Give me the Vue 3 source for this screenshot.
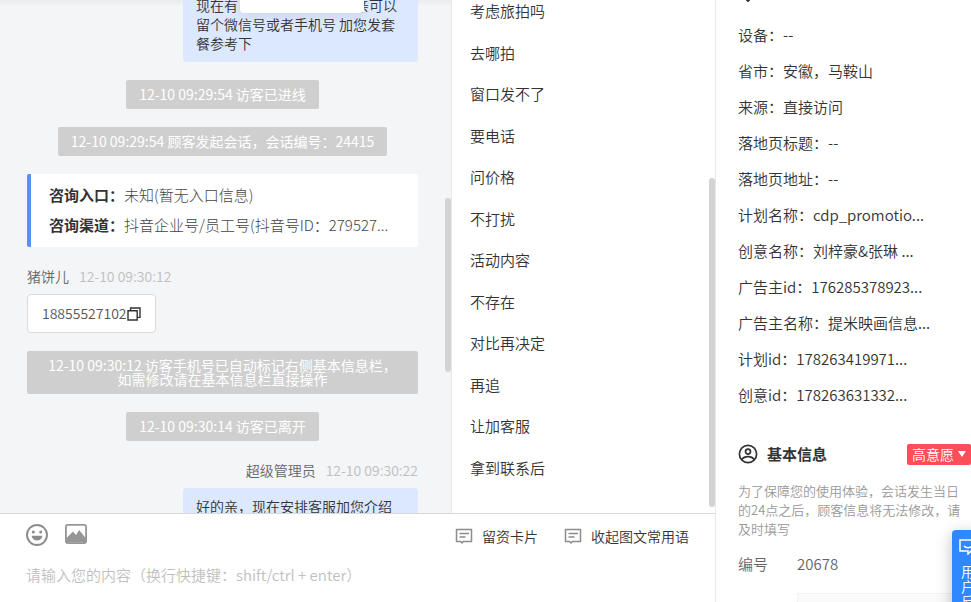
<template>
    <div class="desk">
        <main class="desk__main">
            <div class="desk__body">
                <section class="chat">
                    <div class="chat__list">
                        <div class="bubble bubble--mine">
                            现在有<span class="bubble__gap"></span>亲可以留个微信号或者手机号 加您发套餐参考下
                        </div>

                        <p v-for="notice in openNotices" :key="notice" class="notice">{{ notice }}</p>

                        <dl class="source">
                            <div v-for="item in source" :key="item.label" class="source__row">
                                <dt>{{ item.label }}：</dt>
                                <dd>{{ item.value }}</dd>
                            </div>
                        </dl>

                        <div class="message">
                            <div class="message__meta">
                                <span>猪饼儿</span>
                                <time>12-10 09:30:12</time>
                            </div>
                            <div class="bubble bubble--visitor">
                                18855527102
                                <button class="copy" type="button" aria-label="复制">
                                    <svg viewBox="0 0 14 14" width="14" height="14" fill="none" stroke="#333" stroke-width="1.4">
                                        <path d="M1 3.8h9.2V13H1z" />
                                        <path d="M3.6 3.6V1H13v9.4h-2.6" />
                                    </svg>
                                </button>
                            </div>
                        </div>

                        <p v-for="notice in closeNotices" :key="notice" class="notice">{{ notice }}</p>

                        <div class="message message--mine">
                            <div class="message__meta">
                                <span>超级管理员</span>
                                <time>12-10 09:30:22</time>
                            </div>
                            <div class="bubble bubble--mine">
                                好的亲，现在安排客服加您介绍
                            </div>
                        </div>
                    </div>
                    <span class="thumb thumb--chat"></span>
                </section>

                <section class="phrases">
                    <ul class="phrases__list">
                        <li v-for="phrase in phrases" :key="phrase">
                            <button class="phrases__item" type="button">{{ phrase }}</button>
                        </li>
                    </ul>
                    <span class="thumb thumb--phrases"></span>
                </section>
            </div>

            <div class="editor">
                <div class="editor__bar">
                    <button class="editor__icon" type="button" aria-label="表情">
                        <svg viewBox="0 0 22 22" width="22" height="22">
                            <circle cx="11" cy="11" r="10" fill="none" stroke="#8c8c8c" stroke-width="1.9" />
                            <circle cx="7.3" cy="8" r="1.5" fill="#8c8c8c" />
                            <circle cx="14.7" cy="8" r="1.5" fill="#8c8c8c" />
                            <path d="M5.6 11.8h10.8c-.4 3-2.6 4.8-5.4 4.8s-5-1.8-5.4-4.8z" fill="#8c8c8c" />
                        </svg>
                    </button>
                    <button class="editor__icon" type="button" aria-label="图片">
                        <svg viewBox="0 0 22 20" width="22" height="20">
                            <rect x="0.9" y="0.9" width="20.2" height="18.2" rx="2" fill="none" stroke="#969696" stroke-width="1.8" />
                            <path d="M1 14.500l7-7 3 3.500 3.200-5 6.800 8.500V18.500H1z" fill="#969696" />
                        </svg>
                    </button>
                    <div class="editor__tools">
                        <button v-for="tool in tools" :key="tool" class="editor__tool" type="button">
                            <svg viewBox="0 0 18 16" width="18" height="16" fill="none" stroke="#8c8c8c" stroke-width="1.5">
                                <path d="M1.500 1.500h15v12H8.300L7 15l-1.400-1.500H1.500z" stroke-linejoin="round" />
                                <path d="M4.500 5.500h9.500M4.500 9h6" />
                            </svg>
                            {{ tool }}
                        </button>
                    </div>
                </div>
                <textarea
                    v-model="draft"
                    class="editor__input"
                    aria-label="消息内容"
                    placeholder="请输入您的内容（换行快捷键：shift/ctrl + enter）"
                ></textarea>
            </div>
        </main>

        <aside class="profile">
            <svg class="profile__pin" viewBox="0 0 20 20" width="20" height="20">
                <path d="M10 19L4 12.500a8 8 0 1 1 12 0z" fill="none" stroke="#333" stroke-width="2" />
                <circle cx="10" cy="7.500" r="2.500" fill="#333" />
            </svg>
            <dl class="visit">
                <div v-for="item in visit" :key="item.label" class="visit__row">
                    <dt>{{ item.label }}：</dt>
                    <dd>{{ item.value }}</dd>
                </div>
            </dl>

            <div class="profile__head">
                <svg viewBox="0 0 20 20" width="20" height="20" fill="none" stroke="#333" stroke-width="1.7">
                    <circle cx="10" cy="10" r="8.600" />
                    <circle cx="10" cy="7.600" r="2.500" />
                    <path d="M3.800 15.600c1.400-2.300 3.600-3 6.200-3s4.800.7 6.200 3" />
                </svg>
                <h2>基本信息</h2>
                <button class="intent" type="button">
                    高意愿
                    <svg viewBox="0 0 8 6" width="8" height="6"><path d="M0 0h8L4 6z" fill="#fff" /></svg>
                </button>
            </div>
            <p class="profile__tip">
                为了保障您的使用体验，会话发生当日的24点之后，顾客信息将无法修改，请及时填写
            </p>
            <div class="profile__number">
                <span>编号</span>
                <span>20678</span>
            </div>
            <input v-model="remark" class="profile__input" type="text" aria-label="姓名">

            <button class="feedback" type="button">
                <svg viewBox="0 0 18 16" width="18" height="16" fill="none" stroke="#fff" stroke-width="1.5">
                    <path d="M1 1h16v11h-5l-3 3v-3H1z" />
                    <path d="M5 7c2 2.200 6 2.200 8 0" />
                </svg>
                <span>用户反馈</span>
            </button>
        </aside>
    </div>
</template>

<script setup>
import { ref } from 'vue';

const draft = ref('');
const remark = ref('');

const openNotices = [
    '12-10 09:29:54 访客已进线',
    '12-10 09:29:54 顾客发起会话，会话编号：24415',
];

const closeNotices = [
    '12-10 09:30:12 访客手机号已自动标记右侧基本信息栏，\n如需修改请在基本信息栏直接操作',
    '12-10 09:30:14 访客已离开',
];

const source = [
    { label: '咨询入口', value: '未知(暂无入口信息)' },
    { label: '咨询渠道', value: '抖音企业号/员工号(抖音号ID：279527...' },
];

const phrases = [
    '考虑旅拍吗',
    '去哪拍',
    '窗口发不了',
    '要电话',
    '问价格',
    '不打扰',
    '活动内容',
    '不存在',
    '对比再决定',
    '再追',
    '让加客服',
    '拿到联系后',
];

const tools = ['留资卡片', '收起图文常用语'];

const visit = [
    { label: '设备', value: '--' },
    { label: '省市', value: '安徽，马鞍山' },
    { label: '来源', value: '直接访问' },
    { label: '落地页标题', value: '--' },
    { label: '落地页地址', value: '--' },
    { label: '计划名称', value: 'cdp_promotio...' },
    { label: '创意名称', value: '刘梓豪&张琳 ...' },
    { label: '广告主id', value: '176285378923...' },
    { label: '广告主名称', value: '提米映画信息...' },
    { label: '计划id', value: '178263419971...' },
    { label: '创意id', value: '178263631332...' },
];
</script>

<style>
body {
    margin: 0;
    overflow: hidden;
}
</style>

<style scoped>
.desk {
    display: grid;
    grid-template-columns: minmax(0, 1fr) 256px;
    height: 100vh;
    overflow: hidden;
    background: #ffffff;
    color: #333333;
    font-family: "Noto Sans CJK SC", "Liberation Sans", sans-serif;
    font-size: 15px;
    font-weight: 350;
}

button {
    border: 0;
    padding: 0;
    background: none;
    color: inherit;
    font: inherit;
    cursor: pointer;
}

dl,
dd,
p,
ul,
h2 {
    margin: 0;
    padding: 0;
}

.desk__main {
    display: flex;
    flex-direction: column;
    min-height: 0;
}

.desk__body {
    display: grid;
    grid-template-columns: minmax(0, 1fr) 264px;
    flex: 1;
    min-height: 0;
}

.chat {
    position: relative;
    overflow: hidden;
    background: linear-gradient(#eaecee, #f3f5f7 6px);
}

/* scrolled a little past the first message */
.chat__list {
    display: flex;
    flex-direction: column;
    align-items: center;
    gap: 18px;
    margin-top: -13px;
    padding: 0 33px 0 27px;
}

.bubble {
    box-sizing: border-box;
    border-radius: 4px;
    font-size: 14px;
    line-height: 19px;
}

.bubble--mine {
    align-self: flex-end;
    width: 235px;
    padding: 9px 13px;
    background: #dce8fe;
}

.bubble--visitor {
    display: flex;
    align-items: center;
    padding: 9px 14px;
    border: 1px solid #d9d9d9;
    background: #ffffff;
    color: #555555;
}

.bubble__gap {
    position: relative;
    display: inline-block;
    width: 117px;
    height: 12px;
}

.bubble__gap::after {
    content: "";
    position: absolute;
    top: -4px;
    left: 2px;
    width: 124px;
    height: 18px;
    border-radius: 4px;
    background: #ffffff;
    box-shadow: 0 3px 12px rgba(0, 0, 0, 0.08);
}

.notice {
    padding: 7px 13px 8px;
    border-radius: 2px;
    background: #cfcfcf;
    color: #ffffff;
    font-size: 14px;
    font-weight: 400;
    line-height: 14px;
    text-align: center;
    white-space: pre-line;
}

.notice:nth-last-child(3) {
    align-self: stretch;
}

.source {
    align-self: stretch;
    padding: 6px 18px 7px;
    border-left: 4px solid #5b8ff0;
    border-radius: 2px;
    background: #ffffff;
    line-height: 30px;
}

.source__row {
    display: flex;
    white-space: nowrap;
}

.source dt {
    font-weight: 700;
}

.source dd {
    color: #444444;
    font-weight: 300;
}

.message {
    display: flex;
    flex-direction: column;
    align-self: stretch;
    align-items: flex-start;
    gap: 6px;
}

.message--mine {
    align-items: flex-end;
}

.message__meta {
    display: flex;
    gap: 10px;
    color: #666666;
    font-size: 14px;
    line-height: 23px;
}

.message__meta time {
    color: #bfbfbf;
}

.copy {
    display: flex;
}

.thumb {
    position: absolute;
    width: 6px;
    border-radius: 3px;
    background: #d3d3d3;
}

.thumb--chat {
    top: 198px;
    right: 0;
    height: 174px;
}

.thumb--phrases {
    top: 178px;
    right: 0;
    height: 329px;
}

.phrases {
    position: relative;
    display: flex;
    border-left: 1px solid #e8e8e8;
    overflow: hidden;
}

.phrases__list {
    display: grid;
    grid-auto-rows: minmax(0, 1fr);
    flex: 1;
    margin: -10px 0 25px;
    list-style: none;
}

.phrases__item {
    width: 100%;
    height: 100%;
    padding: 0 18px;
    text-align: left;
}

.editor {
    display: flex;
    flex-direction: column;
    box-sizing: border-box;
    height: 89px;
    padding: 8px 26px 0;
    border-top: 1px solid #d9d9d9;
}

.editor__bar {
    display: flex;
    align-items: flex-start;
    gap: 17px;
    height: 28px;
}

.editor__icon {
    display: flex;
    padding-top: 2px;
}

.editor__tools {
    display: flex;
    gap: 26px;
    margin-left: auto;
}

.editor__tool {
    display: flex;
    align-items: center;
    gap: 9px;
    font-size: 14px;
    line-height: 28px;
}

.editor__input {
    flex: 1;
    margin-top: 14px;
    padding: 0;
    border: 0;
    outline: 0;
    resize: none;
    background: none;
    color: #333333;
    font: inherit;
    line-height: 22px;
}

.editor__input::placeholder {
    color: #bfbfbf;
}

.profile {
    position: relative;
    border-left: 1px solid #e8e8e8;
    padding: 0 8px 0 22px;
    overflow: hidden;
}

.profile__pin {
    display: block;
    margin-top: -18px;
}

.visit {
    padding-top: 15px;
    line-height: 36px;
}

.visit__row {
    display: flex;
    white-space: nowrap;
}

.profile__head {
    display: flex;
    align-items: center;
    gap: 9px;
    margin: 30px -8px 0 0;
    line-height: 22px;
}

.profile__head h2 {
    font-size: 15px;
    font-weight: 700;
}

.intent {
    display: flex;
    align-items: center;
    gap: 4px;
    margin-left: auto;
    padding: 0 5px;
    border-radius: 2px;
    background: #ff4d5a;
    color: #ffffff;
    font-size: 14px;
    line-height: 21px;
}

.profile__tip {
    margin-top: 16px;
    color: #999999;
    font-size: 13px;
    line-height: 19px;
}

.profile__number {
    display: grid;
    grid-template-columns: 59px 1fr;
    margin-top: 15px;
    color: #666666;
    line-height: 22px;
}

.profile__input {
    box-sizing: border-box;
    width: 174px;
    height: 36px;
    margin: 18px 0 0 59px;
    border: 1px solid #f2f2f2;
    background: #fafafa;
    font: inherit;
}

/* fixed tab hanging over the right edge */
.feedback {
    position: absolute;
    top: 530px;
    right: -13px;
    display: flex;
    flex-direction: column;
    align-items: center;
    gap: 9px;
    width: 32px;
    padding: 9px 0;
    border-radius: 4px;
    background: #2f88ff;
    box-shadow: 0 4px 16px rgba(0, 0, 0, 0.25);
    color: #ffffff;
    font-size: 14px;
    line-height: 15px;
}

.feedback span {
    width: 14px;
}
</style>
